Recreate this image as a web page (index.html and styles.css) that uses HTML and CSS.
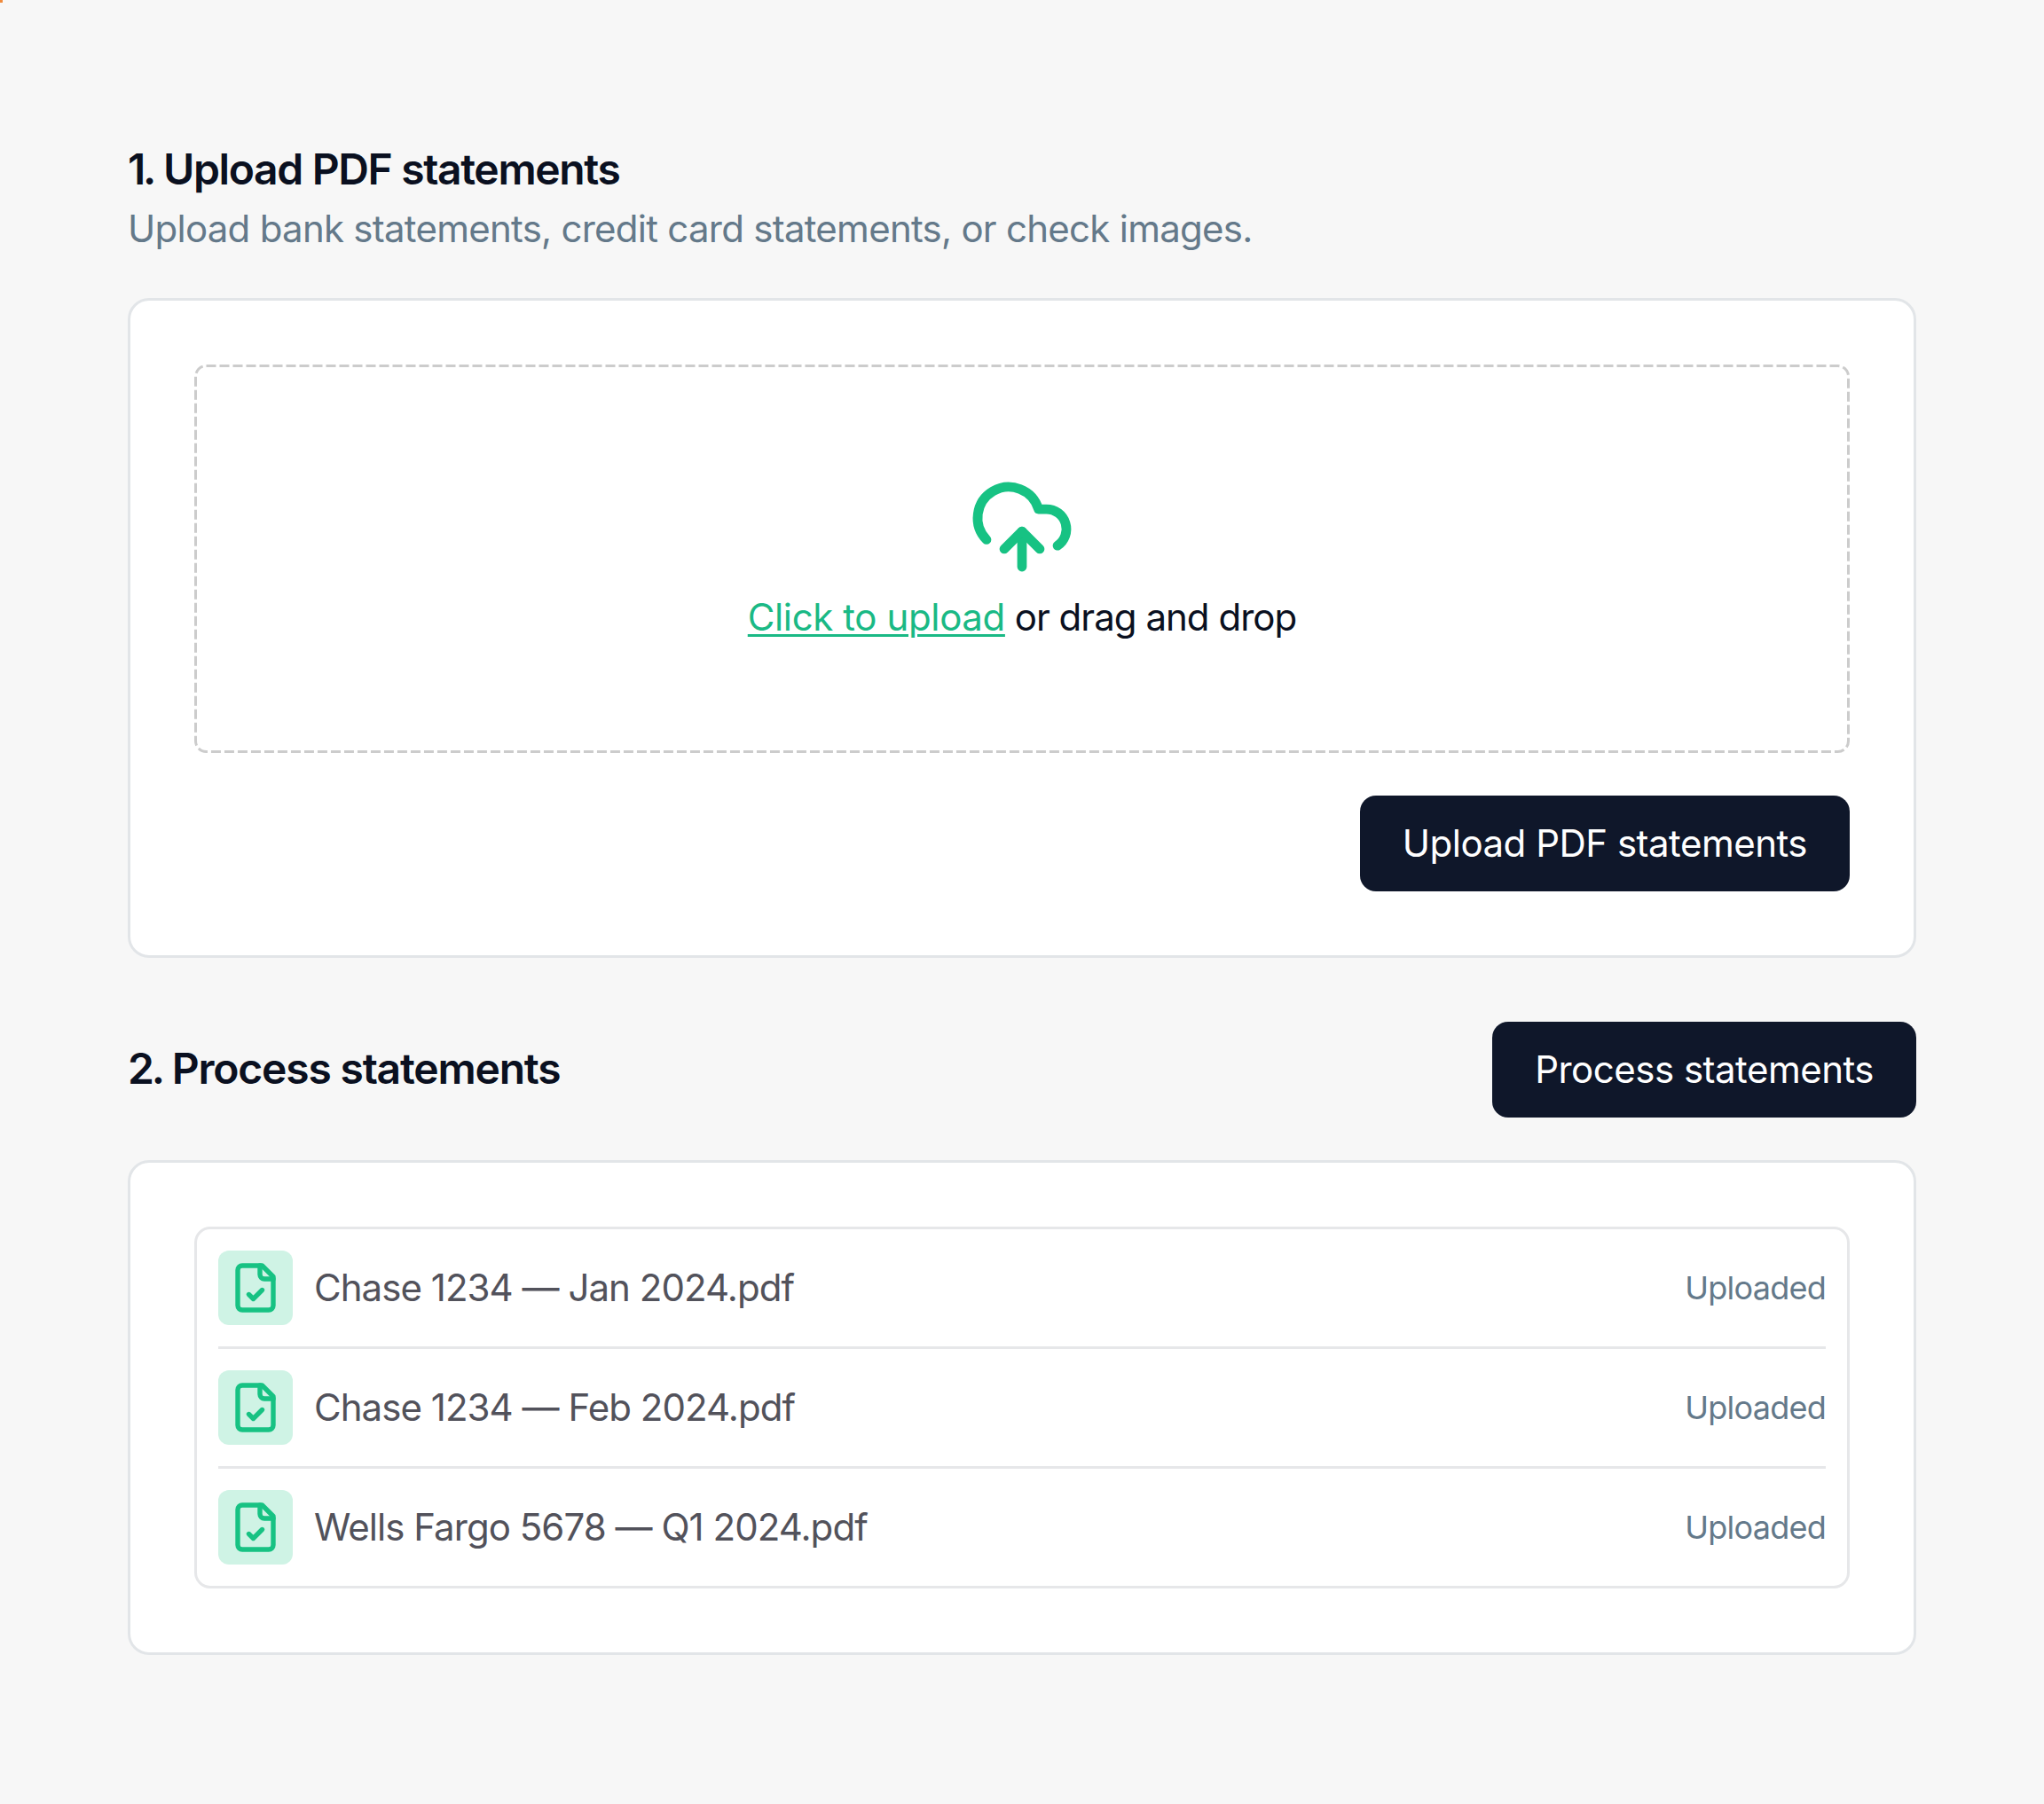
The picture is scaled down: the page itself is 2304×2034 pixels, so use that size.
FILE: index.html
```html
<!DOCTYPE html>
<html lang="en">
<head>
<meta charset="utf-8">
<title>Statements</title>
<link rel="stylesheet" href="styles.css">
</head>
<body>
<span class="corner"></span>
<main class="page">
  <section class="upload-head">
    <h2 class="title title-upload"><span class="num">1.</span> Upload PDF statements</h2>
    <p class="subtitle">Upload bank statements, credit card statements, or check images.</p>
  </section>
  <section class="card">
    <div class="dropzone">
      <svg class="dash" aria-hidden="true"><rect class="dash-rect"/></svg>
      <svg class="cloud" viewBox="0 0 24 24" fill="none" stroke="currentColor" stroke-width="2.15" stroke-linecap="round" stroke-linejoin="round"><path d="M12 13v8"/><path d="M4 14.899A7 7 0 1 1 15.71 8h1.79a4.5 4.5 0 0 1 2.5 8.242"/><path d="m8 17 4-4 4 4"/></svg>
      <p class="drop-text"><a class="link" href="#">Click to upload</a> or drag and drop</p>
    </div>
    <div class="actions"><button class="btn">Upload PDF statements</button></div>
  </section>
  <section class="process-head">
    <h2 class="title"><span class="num">2.</span> Process statements</h2>
    <button class="btn">Process statements</button>
  </section>
  <section class="card">
    <ul class="files">
      <li class="file">
        <span class="file-icon"><svg viewBox="0 0 24 24" fill="none" stroke="currentColor" stroke-width="2.15" stroke-linecap="round" stroke-linejoin="round"><path d="M15 2H6a2 2 0 0 0-2 2v16a2 2 0 0 0 2 2h12a2 2 0 0 0 2-2V7Z"/><path d="M14 2v4a2 2 0 0 0 2 2h4"/><path d="m9 15 2 2 4-4"/></svg></span>
        <span class="file-name">Chase 1234 — Jan 2024.pdf</span>
        <span class="file-status">Uploaded</span>
      </li>
      <li class="file">
        <span class="file-icon"><svg viewBox="0 0 24 24" fill="none" stroke="currentColor" stroke-width="2.15" stroke-linecap="round" stroke-linejoin="round"><path d="M15 2H6a2 2 0 0 0-2 2v16a2 2 0 0 0 2 2h12a2 2 0 0 0 2-2V7Z"/><path d="M14 2v4a2 2 0 0 0 2 2h4"/><path d="m9 15 2 2 4-4"/></svg></span>
        <span class="file-name">Chase 1234 — Feb 2024.pdf</span>
        <span class="file-status">Uploaded</span>
      </li>
      <li class="file">
        <span class="file-icon"><svg viewBox="0 0 24 24" fill="none" stroke="currentColor" stroke-width="2.15" stroke-linecap="round" stroke-linejoin="round"><path d="M15 2H6a2 2 0 0 0-2 2v16a2 2 0 0 0 2 2h12a2 2 0 0 0 2-2V7Z"/><path d="M14 2v4a2 2 0 0 0 2 2h4"/><path d="m9 15 2 2 4-4"/></svg></span>
        <span class="file-name">Wells Fargo 5678 — Q1 2024.pdf</span>
        <span class="file-status">Uploaded</span>
      </li>
    </ul>
  </section>
</main>
</body>
</html>
```

FILE: styles.css
```css
* { box-sizing: border-box; }
html, body { margin: 0; padding: 0; }
body {
  background: #f7f7f7;
  font-family: Inter, "Liberation Sans", sans-serif;
  color: #0a1020;
  min-height: 2034px;
}
.corner {
  position: absolute;
  left: 0;
  top: 0;
  width: 3px;
  height: 3px;
  background: #f08a3c;
}
.page {
  padding: 153px 144px 0;
  display: flex;
  flex-direction: column;
}
.title {
  margin: 0;
  font-size: 48px;
  line-height: 75px;
  font-weight: 600;
  letter-spacing: -1.2px;
  color: #0a1020;
}
.title-upload { letter-spacing: -1.35px; }
.num { letter-spacing: -3.2px; }
.subtitle {
  margin: 0;
  font-size: 42px;
  line-height: 60px;
  letter-spacing: -0.74px;
  color: #64798a;
}
.upload-head { margin-bottom: 48px; }
.card {
  background: #fff;
  border: 3px solid #e2e5e8;
  border-radius: 24px;
  padding: 72px;
}
.dropzone {
  position: relative;
  padding: 123px 0;
  display: flex;
  flex-direction: column;
  align-items: center;
  gap: 12px;
}
.dash {
  position: absolute;
  left: 0;
  top: 0;
  width: 100%;
  height: 100%;
}
.dash-rect {
  x: 1.5px;
  y: 1.5px;
  width: calc(100% - 3px);
  height: calc(100% - 3px);
  rx: 12px;
  fill: none;
  stroke: #cccccc;
  stroke-width: 3px;
  stroke-dasharray: 11 4;
}
.cloud { width: 120px; height: 120px; color: #17c283; display: block; }
.drop-text { margin: 0; font-size: 42px; line-height: 60px; letter-spacing: -0.98px; color: #0a1020; }
.link {
  color: #1ab985;
  letter-spacing: -0.38px;
  text-decoration: underline;
  text-decoration-thickness: 3px;
  text-underline-offset: 4px;
}
.actions { display: flex; justify-content: flex-end; margin-top: 48px; }
.btn {
  border: 0;
  background: #0f172a;
  color: #fff;
  font: 400 42px/60px Inter, "Liberation Sans", sans-serif;
  letter-spacing: -0.5px;
  height: 108px;
  padding: 0 48px;
  border-radius: 18px;
}
.process-head {
  display: flex;
  justify-content: space-between;
  align-items: center;
  margin: 72px 0 48px;
}
.process-head .title { margin-bottom: 3px; }
.files {
  list-style: none;
  margin: 0;
  padding: 0 24px;
  border: 3px solid #e6e7e9;
  border-radius: 18px;
}
.file {
  display: flex;
  align-items: center;
  gap: 24px;
  padding: 24px 0;
  border-bottom: 3px solid #e6e7e9;
}
.file:last-child { border-bottom: 0; }
.file-icon {
  width: 84px;
  height: 84px;
  background: #cff3e5;
  border-radius: 12px;
  color: #17c283;
  display: flex;
  align-items: center;
  justify-content: center;
  flex: none;
}
.file-icon svg { width: 60px; height: 60px; display: block; }
.file-name { flex: 1; font-size: 42px; line-height: 60px; letter-spacing: -0.96px; color: #52525b; }
.file-status { font-size: 36px; line-height: 48px; letter-spacing: -0.75px; color: #64798a; }
```
